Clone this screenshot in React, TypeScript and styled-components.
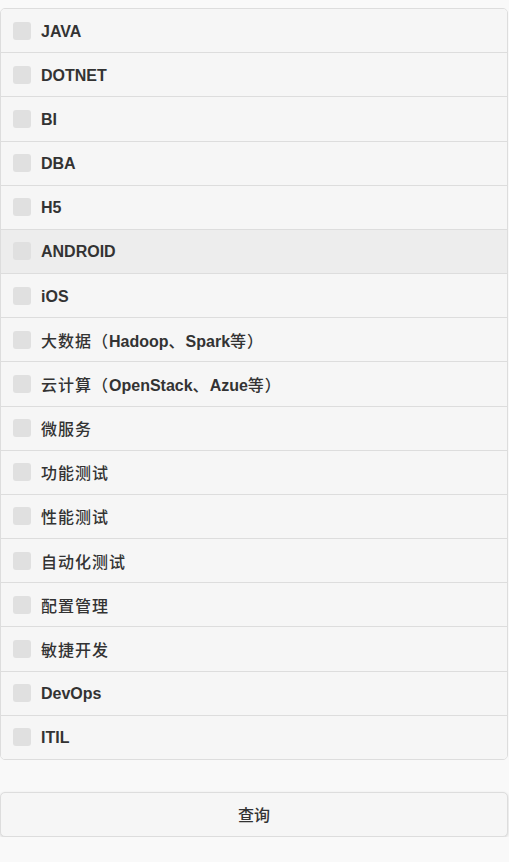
import React from "react";
import styled, { createGlobalStyle } from "styled-components";

const Global = createGlobalStyle`
  html, body { margin: 0; padding: 0; background: #f9f9f9; }
  body { font-family: "Liberation Sans", Arial, "Noto Sans CJK SC", sans-serif; color: #333; }
`;

const Page = styled.div`
  width: 508px;
  padding-top: 8px;
  display: flex;
  flex-direction: column;
  gap: 32px;
`;

const List = styled.div`
  border: 1px solid #ddd;
  border-radius: 5px;
  background: #f6f6f6;
  overflow: hidden;
`;

const Row = styled.label<{ $hover?: boolean }>`
  display: flex;
  align-items: center;
  gap: 10px;
  box-sizing: border-box;
  height: 44.18px;
  padding: 0 12px;
  background: ${(p) => (p.$hover ? "#ededed" : "#f6f6f6")};
  border-top: 1px solid #ddd;
  &:first-child { border-top: none; height: 43.18px; }
  font-size: 16px;
  font-weight: bold;
  color: #333;
  line-height: 20px;
`;

const Box = styled.span`
  width: 18px;
  height: 18px;
  border-radius: 3px;
  background: #e0e0e0;
  flex: none;
`;

const Label = styled.span`
  padding-top: 2px;
`;

const Cjk = styled.span`
  font-family: "Noto Sans CJK SC", sans-serif;
  font-weight: 500;
  letter-spacing: 1px;
`;

const Button = styled.button`
  box-sizing: border-box;
  width: 100%;
  height: 45px;
  border: 1px solid #ddd;
  border-radius: 5px;
  background: #f6f6f6;
  box-shadow: 0 1px 3px rgba(0, 0, 0, 0.15);
  font-family: "Noto Sans CJK SC", sans-serif;
  font-weight: 500;
  font-size: 16px;
  color: #333;
  padding: 0;
`;

type Part = string | { c: string };
const items: { parts: Part[]; hover?: boolean }[] = [
  { parts: ["JAVA"] },
  { parts: ["DOTNET"] },
  { parts: ["BI"] },
  { parts: ["DBA"] },
  { parts: ["H5"] },
  { parts: ["ANDROID"], hover: true },
  { parts: ["iOS"] },
  { parts: [{ c: "大数据（" }, "Hadoop", { c: "、" }, "Spark", { c: "等）" }] },
  { parts: [{ c: "云计算（" }, "OpenStack", { c: "、" }, "Azue", { c: "等）" }] },
  { parts: [{ c: "微服务" }] },
  { parts: [{ c: "功能测试" }] },
  { parts: [{ c: "性能测试" }] },
  { parts: [{ c: "自动化测试" }] },
  { parts: [{ c: "配置管理" }] },
  { parts: [{ c: "敏捷开发" }] },
  { parts: ["DevOps"] },
  { parts: ["ITIL"] },
];

export default function App() {
  return (
    <>
      <Global />
      <Page>
        <List>
          {items.map((it, i) => (
            <Row key={i} $hover={it.hover}>
              <Box />
              <Label>
                {it.parts.map((p, j) =>
                  typeof p === "string" ? p : <Cjk key={j}>{p.c}</Cjk>
                )}
              </Label>
            </Row>
          ))}
        </List>
        <Button>查询</Button>
      </Page>
    </>
  );
}
